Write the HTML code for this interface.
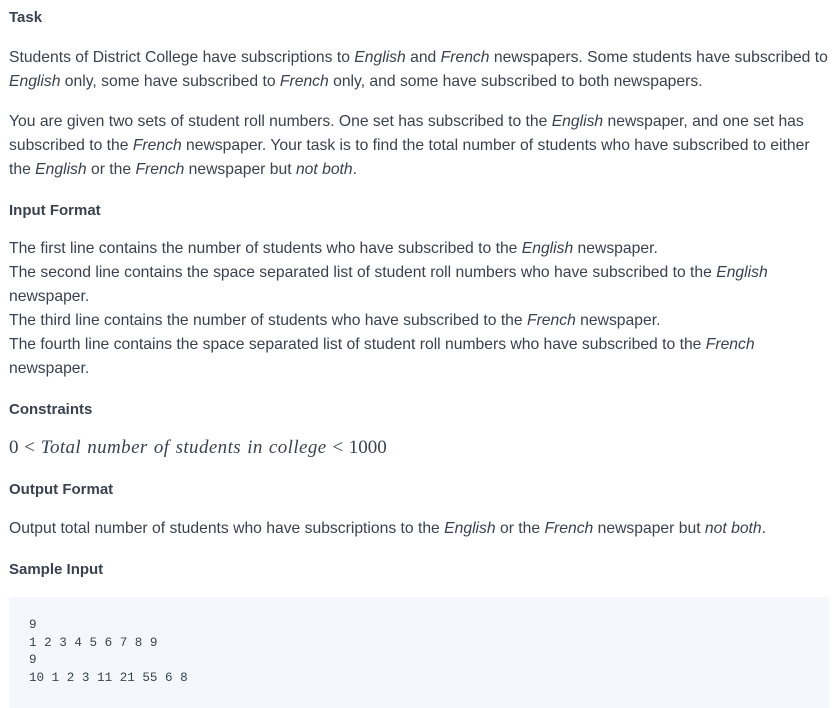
<!DOCTYPE html>
<html><head><meta charset="utf-8"><style>
body{margin:0;width:838px;height:708px;background:#fff;position:relative;overflow:hidden;font-family:"Liberation Sans",sans-serif;color:#39424e;font-size:15.7px}
.l{position:absolute;left:9px;line-height:24px;white-space:nowrap}
.h{font-weight:bold;font-size:15px;color:#39424e}
.m{font-family:"Liberation Serif",serif;font-size:19px;word-spacing:1px}
.m i{letter-spacing:0.4px}
pre{position:absolute;left:9px;top:597px;width:820px;height:111px;margin:0;background:#f4f8fd;font-family:"Liberation Mono",monospace;font-size:12.6px;line-height:17.5px;padding:20px 0 0 20px;box-sizing:border-box;color:#39424e}
</style></head><body>
<div class="l h" style="top:6px">Task</div>
<div class="l" style="top:46px">Students of District College have subscriptions to <i>English</i> and <i>French</i> newspapers. Some students have subscribed to</div>
<div class="l" style="top:70px"><i>English</i> only, some have subscribed to <i>French</i> only, and some have subscribed to both newspapers.</div>
<div class="l" style="top:110px">You are given two sets of student roll numbers. One set has subscribed to the <i>English</i> newspaper, and one set has</div>
<div class="l" style="top:134px">subscribed to the <i>French</i> newspaper. Your task is to find the total number of students who have subscribed to either</div>
<div class="l" style="top:158px">the <i>English</i> or the <i>French</i> newspaper but <i>not both</i>.</div>
<div class="l h" style="top:199px">Input Format</div>
<div class="l" style="top:237px">The first line contains the number of students who have subscribed to the <i>English</i> newspaper.</div>
<div class="l" style="top:261px">The second line contains the space separated list of student roll numbers who have subscribed to the <i>English</i></div>
<div class="l" style="top:285px">newspaper.</div>
<div class="l" style="top:309px">The third line contains the number of students who have subscribed to the <i>French</i> newspaper.</div>
<div class="l" style="top:333px">The fourth line contains the space separated list of student roll numbers who have subscribed to the <i>French</i></div>
<div class="l" style="top:357px">newspaper.</div>
<div class="l h" style="top:398px">Constraints</div>
<div class="l m" style="top:436px">0 &lt; <i>Total number of students in college</i> &lt; 1000</div>
<div class="l h" style="top:478px">Output Format</div>
<div class="l" style="top:517px">Output total number of students who have subscriptions to the <i>English</i> or the <i>French</i> newspaper but <i>not both</i>.</div>
<div class="l h" style="top:558px">Sample Input</div>
<pre>9
1 2 3 4 5 6 7 8 9
9
10 1 2 3 11 21 55 6 8</pre>
</body></html>
